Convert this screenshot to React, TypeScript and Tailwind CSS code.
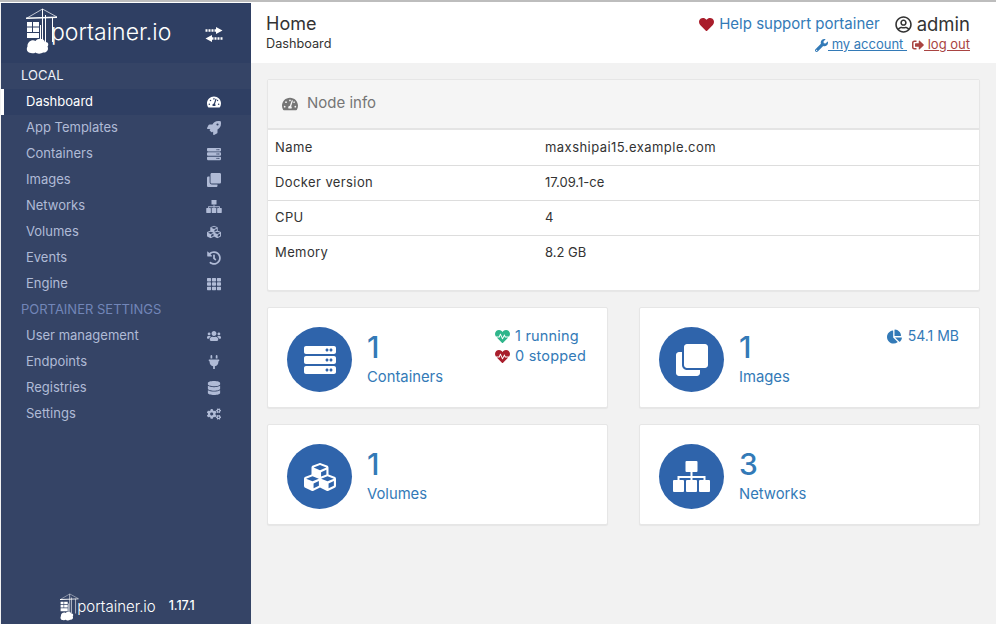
import type { ReactNode } from 'react';
import {
  FaChartPie,
  FaClone,
  FaCogs,
  FaCubes,
  FaDatabase,
  FaHeart,
  FaHeartbeat,
  FaHistory,
  FaPlug,
  FaRegUserCircle,
  FaRocket,
  FaServer,
  FaSignOutAlt,
  FaTachometerAlt,
  FaTh,
  FaUsers,
  FaWrench,
} from 'react-icons/fa';

function SitemapIcon({ className }: { className: string }) {
  return (
    <svg viewBox="0 0 37 31" className={className} fill="currentColor">
      <rect x="12.500" y="0" width="12" height="11" rx="1" />
      <path d="M17.500 11 H19.500 V15 H32.500 V19 H30.500 V17 H19.500 V19 H17.500 V17 H6.500 V19 H4.500 V15 H17.500 Z" />
      <rect x="0" y="19" width="11" height="12" rx="1" />
      <rect x="13" y="19" width="11" height="12" rx="1" />
      <rect x="26" y="19" width="11" height="12" rx="1" />
    </svg>
  );
}

const LOCAL_ITEMS: { label: string; icon: ReactNode; active?: boolean }[] = [
  { label: 'Dashboard', icon: <FaTachometerAlt />, active: true },
  { label: 'App Templates', icon: <FaRocket /> },
  { label: 'Containers', icon: <FaServer /> },
  { label: 'Images', icon: <FaClone /> },
  { label: 'Networks', icon: <SitemapIcon className="h-[13px] w-[16px]" /> },
  { label: 'Volumes', icon: <FaCubes /> },
  { label: 'Events', icon: <FaHistory /> },
  { label: 'Engine', icon: <FaTh /> },
];

const SETTINGS_ITEMS: { label: string; icon: ReactNode; active?: boolean }[] = [
  { label: 'User management', icon: <FaUsers /> },
  { label: 'Endpoints', icon: <FaPlug /> },
  { label: 'Registries', icon: <FaDatabase /> },
  { label: 'Settings', icon: <FaCogs /> },
];

const NODE_INFO = [
  ['Name', 'maxshipai15.example.com'],
  ['Docker version', '17.09.1-ce'],
  ['CPU', '4'],
  ['Memory', '8.2 GB'],
];

function CraneLogo({ className }: { className: string }) {
  return (
    <svg viewBox="0 0 32 46" className={className} fill="white">
      {/* jib and cables */}
      <path d="M0 9.600 L31 8.600 V10 L0 11 Z" />
      <path d="M16 1 H17 V34 H16 Z M19 7 H20 V34 H19 Z M26 9 H27 V34 H26 Z" />
      <path d="M16.500 1 L31 9 M16.500 1 L1 10" stroke="white" strokeWidth="0.7" fill="none" />
      {/* stacked containers */}
      <path d="M1 14 H6 V18.500 H1 Z M7 14 H13 V18.500 H7 Z M1 19.500 H6 V24 H1 Z M7 19.500 H13 V24 H7 Z M1 25 H13 V30 H1 Z" />
      <path d="M14 17 H15 V31 H14 Z" />
      {/* cloud */}
      <path d="M5 45 C1 45 0 41 1.500 38.500 C1 34 6 31 9.500 33 C12 29.500 18 30.500 19 34 C22.500 33.500 23 37 21.500 38.500 C23 41.500 21 45 17 44.500 C15 46 11 46 9.500 44.500 C8 45.500 6.500 45.500 5 45 Z" />
    </svg>
  );
}

function TransferIcon() {
  return (
    <svg viewBox="0 0 18 15" className="h-[15px] w-[18px]" fill="white">
      <path d="M11 0 L17.500 3.500 L11 7 V4.800 H9.500 V2.200 H11 Z" />
      <path d="M0.500 2.200 H2.500 V4.800 H0.500 Z M3.500 2.200 H5.500 V4.800 H3.500 Z M6.500 2.200 H8.500 V4.800 H6.500 Z" />
      <path d="M7 8 L0.500 11.500 L7 15 V12.800 H8.500 V10.200 H7 Z" />
      <path d="M9.500 10.200 H11.500 V12.800 H9.500 Z M12.500 10.200 H14.500 V12.800 H12.500 Z M15.500 10.200 H17.500 V12.800 H15.500 Z" />
    </svg>
  );
}

function NavList({ items }: { items: typeof LOCAL_ITEMS }) {
  return (
    <>
      {items.map((item) => (
        <div
          key={item.label}
          className={
            item.active
              ? 'flex h-[26px] items-center justify-between border-l-[3px] border-white bg-[#2f3f63] pl-[22px] pr-[29px] text-[13px] text-white'
              : 'flex h-[26px] items-center justify-between pl-[25px] pr-[29px] text-[13px] text-[#b0bbd6]'
          }
        >
          <span>{item.label}</span>
          <span className="flex w-[16px] justify-center text-[14px]">{item.icon}</span>
        </div>
      ))}
    </>
  );
}

function Sidebar() {
  return (
    <aside className="flex w-[250px] shrink-0 flex-col bg-[#354466]">
      <div className="flex h-[60px] items-center bg-[#2f3f63] pl-[25px]">
        <CraneLogo className="mb-[4px] h-[46px] w-[32px]" />
        <span className="mb-[2px] ml-[-7px] w-[121px] whitespace-nowrap text-[23px] font-light leading-none text-white">
          portainer.io
        </span>
        <span className="ml-[33px] mt-[3px]">
          <TransferIcon />
        </span>
      </div>
      <div className="flex h-[26px] items-center pl-[20px] text-[13px] text-[#eef1f7]">LOCAL</div>
      <NavList items={LOCAL_ITEMS} />
      <div className="flex h-[26px] items-center pl-[20px] text-[13px] text-[#7286b8]">PORTAINER SETTINGS</div>
      <NavList items={SETTINGS_ITEMS} />
      <div className="mt-auto flex h-[34px] items-center justify-center pb-[1px] pl-[3px] text-white">
        <CraneLogo className="h-[28px] w-[19px]" />
        <span className="ml-[-2px] text-[15px] font-light leading-none">portainer.io</span>
        <span className="ml-[13px] text-[12.500px] font-medium tracking-[-0.1px]">1.17.1</span>
      </div>
    </aside>
  );
}

function TopBar() {
  return (
    <header className="flex h-[60px] justify-between bg-white pl-[15px] pr-[26px]">
      <div className="pt-[11px]">
        <div className="text-[18px] leading-[20px] text-[#333333]">Home</div>
        <div className="mt-[1px] text-[12.700px] leading-[18px] text-[#333333]">Dashboard</div>
      </div>
      <div className="flex flex-col items-end pt-[11px]">
        <div className="flex h-[21px] items-center">
          <FaHeart className="text-[15px] text-[#a91e2c]" />
          <span className="ml-[5px] text-[15px] text-[#337ab7]">Help support portainer</span>
          <FaRegUserCircle className="ml-[15px] text-[17px] text-[#333333]" />
          <span className="ml-[5px] text-[18.500px] text-[#333333]">admin</span>
        </div>
        <div className="mt-[1px] flex h-[18px] items-center text-[13px]">
          <FaWrench className="text-[13px] text-[#337ab7]" />
          <span className="whitespace-pre text-[#337ab7] underline"> my account </span>
          <FaSignOutAlt className="ml-[5px] text-[12px] text-[#a94442]" />
          <span className="whitespace-pre text-[#a94442] underline"> log out</span>
        </div>
      </div>
    </header>
  );
}

function NodeInfo() {
  return (
    <section className="h-[212px] rounded-[2px] border border-[#e6e6e6] bg-white shadow-[0_1px_1px_rgba(0,0,0,0.05)]">
      <div className="flex h-[50px] items-center border-b-2 border-[#e4e4e4] bg-[#f5f5f5] pb-[1px] pl-[14px] text-[15px] text-[#767676]">
        <FaTachometerAlt className="text-[16px]" />
        <span className="ml-[9px]">Node info</span>
      </div>
      <table className="w-full table-fixed text-[13px] text-[#333333]">
        <tbody>
          {NODE_INFO.map(([key, value], i) => (
            <tr key={key} className={i < 3 ? 'h-[35px] border-b border-[#dddddd]' : 'h-[35px]'}>
              <td className="w-[277px] pl-[7px] tracking-[0.4px]">{key}</td>
              <td className={i === 0 ? 'tracking-[0.45px]' : ''}>{value}</td>
            </tr>
          ))}
        </tbody>
      </table>
    </section>
  );
}

function StatCard({ icon, value, label, children }: { icon: ReactNode; value: string; label: string; children?: ReactNode }) {
  return (
    <div className="relative flex h-[101px] items-start rounded-[2px] border border-[#e6e6e6] bg-white pl-[19px] pt-[19px] shadow-[0_1px_1px_rgba(0,0,0,0.05)]">
      <div className="flex h-[65px] w-[65px] items-center justify-center rounded-full bg-[#2f64ab] text-[32px] text-white">{icon}</div>
      <div className="ml-[15px] mt-[4px] text-[#337ab7]">
        <div className="text-[30px] font-medium leading-[33px]">{value}</div>
        <div className="mt-[3px] text-[14.800px] leading-[20px]">{label}</div>
      </div>
      {children}
    </div>
  );
}

export default function App() {
  return (
    <div className="flex h-[624px] w-[996px] flex-col overflow-hidden bg-[#f2f2f2] font-['Inter',sans-serif]">
      <div className="h-[3px] shrink-0 border-t-2 border-[#bdbdbd] bg-white" />
      <div className="flex min-h-0 flex-1 pl-px">
        <Sidebar />
        <main className="min-w-0 flex-1">
          <TopBar />
          <div className="flex flex-col gap-[16px] pl-[16px] pr-[16px] pt-[16px]">
            <NodeInfo />
            <div className="grid grid-cols-2 gap-x-[31px] gap-y-[16px]">
              <StatCard icon={<FaServer />} value="1" label="Containers">
                <div className="absolute left-[227px] top-[18px] text-[14.500px] leading-[20px] tracking-[0.2px] text-[#337ab7]">
                  <div className="flex items-center gap-[5px]">
                    <FaHeartbeat className="text-[15px] text-[#2fb58b]" />
                    <span>1 running</span>
                  </div>
                  <div className="flex items-center gap-[5px]">
                    <FaHeartbeat className="text-[15px] text-[#a91e2c]" />
                    <span>0 stopped</span>
                  </div>
                </div>
              </StatCard>
              <StatCard icon={<FaClone />} value="1" label="Images">
                <div className="absolute right-[20px] top-[18px] flex items-center gap-[6px] text-[14px] leading-[20px] text-[#337ab7]">
                  <FaChartPie className="text-[15px]" />
                  <span>54.1 MB</span>
                </div>
              </StatCard>
              <StatCard icon={<FaCubes />} value="1" label="Volumes" />
              <StatCard icon={<SitemapIcon className="h-[31px] w-[37px]" />} value="3" label="Networks" />
            </div>
          </div>
        </main>
      </div>
    </div>
  );
}
